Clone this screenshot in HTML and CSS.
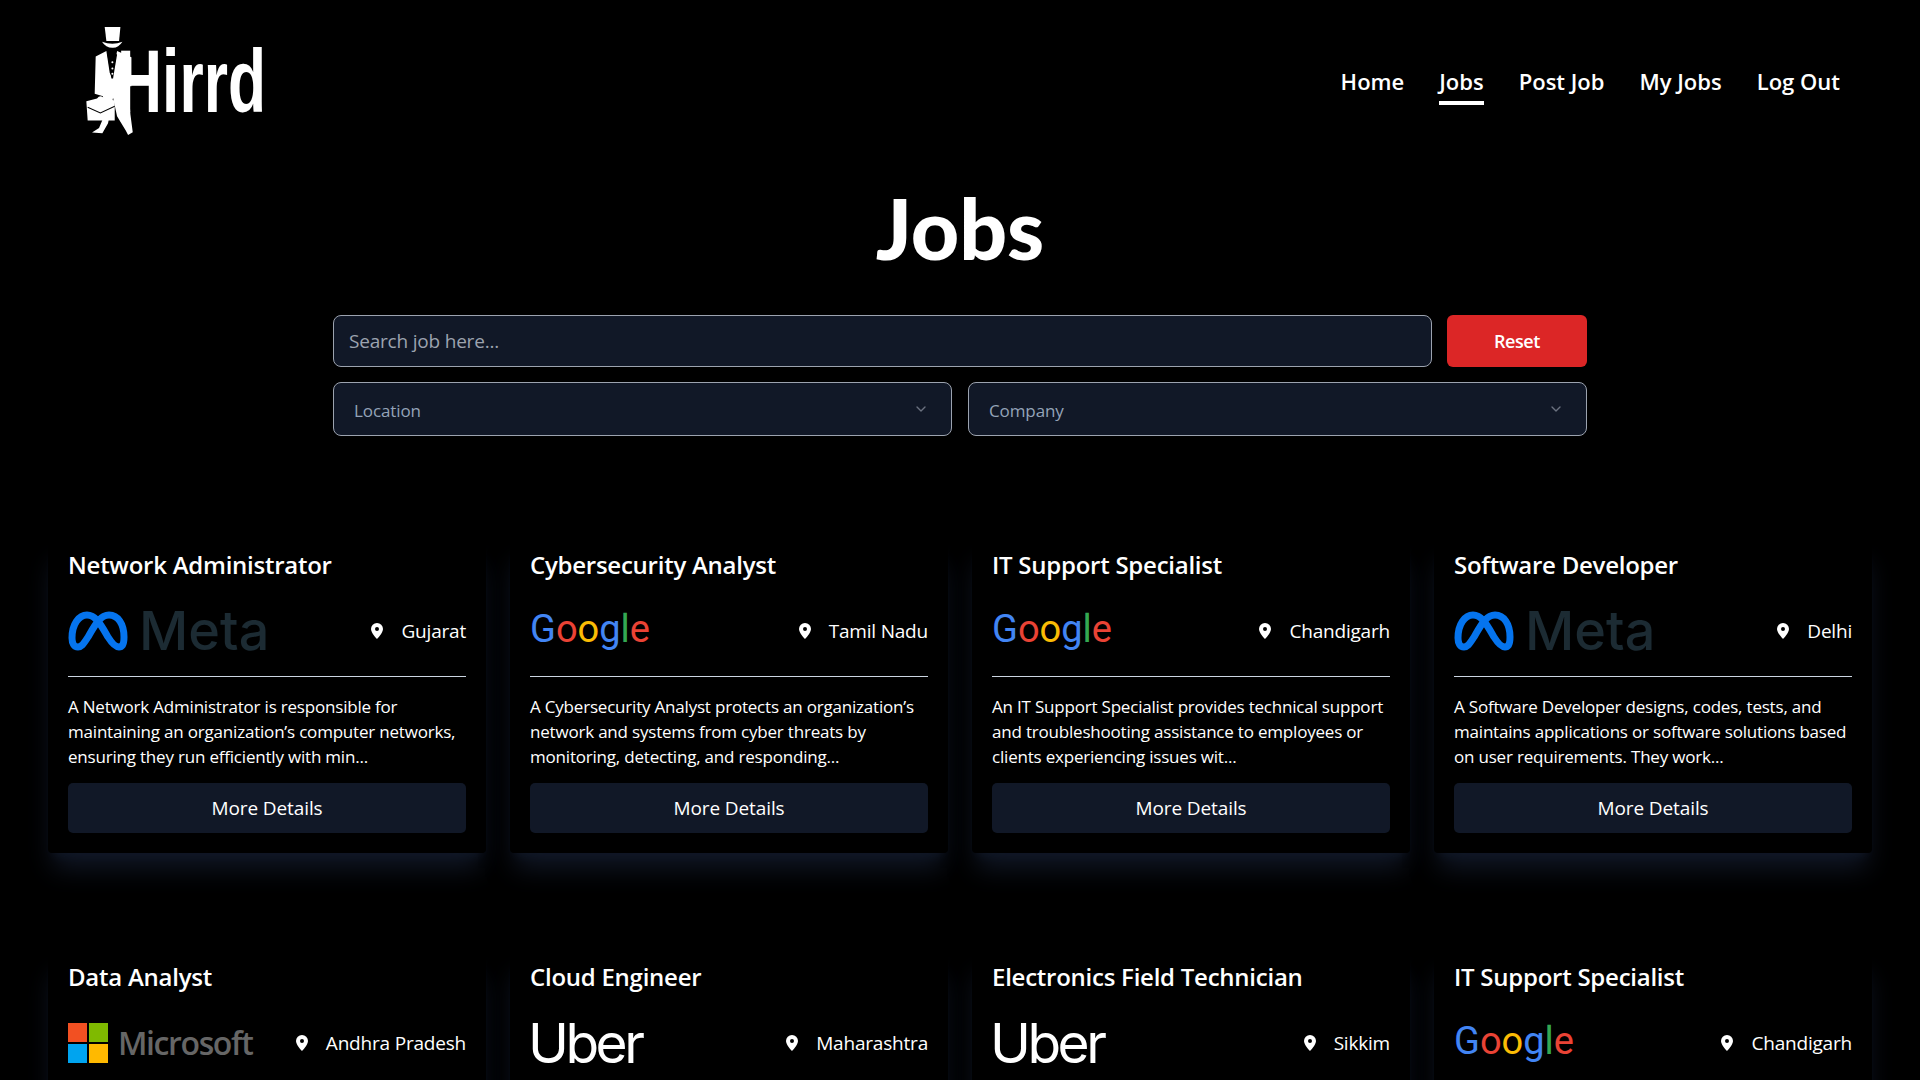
FILE: index.html
```html
<!DOCTYPE html>
<html lang="en">
<head>
  <meta charset="UTF-8">
  <title>Hirrd - Jobs</title>
  <link rel="stylesheet" href="styles.css">
</head>
<body>
  <header class="site-header">
    <a class="brand" href="#">
      <svg class="brand-logo" viewBox="70 60 560 350" role="img" aria-label="Hirrd">
        <path d="M135 78H182L178 120H140Z" fill="#fff"/>
        <path d="M127 122Q158 134 188 122Q176 141 158 140Q138 140 127 122Z" fill="#fff"/>
        <path d="M140 150L108 166L105 278L130 285L130 352L118 380L97 394L128 396L145 366L160 290L172 345L198 388L205 401L219 393L212 340L206 255H215V168L172 150L158 232L150 215Z" fill="#fff"/>
        <path d="M143 160L158 155L172 160L160 232H155Z" fill="#000"/>
        <circle cx="158" cy="183" r="3" fill="#fff"/>
        <circle cx="158" cy="202" r="3" fill="#fff"/>
        <circle cx="158" cy="218" r="3" fill="#fff"/>
        <path d="M80 300L112 292Q122 278 134 292L165 298V358H84Z" fill="#fff"/>
        <path d="M84 318L122 335L165 315" fill="none" stroke="#000" stroke-width="3"/>
        <text class="brand-word" x="172" y="333" textLength="446" lengthAdjust="spacingAndGlyphs">Hirrd</text>
      </svg>
    </a>
    <nav class="site-nav">
      <a href="#">Home</a>
      <a href="#" class="active">Jobs</a>
      <a href="#">Post Job</a>
      <a href="#">My Jobs</a>
      <a href="#">Log Out</a>
    </nav>
  </header>

  <h1 class="page-title">Jobs</h1>

  <div class="filters">
    <form class="search-row">
      <input type="text" class="search-input" placeholder="Search job here...">
      <button type="button" class="reset-btn">Reset</button>
    </form>
    <div class="select-row">
      <button type="button" class="select-box">
        <span>Location</span>
        <svg viewBox="0 0 24 24" class="chevron"><path d="m6 9 6 6 6-6"/></svg>
      </button>
      <button type="button" class="select-box">
        <span>Company</span>
        <svg viewBox="0 0 24 24" class="chevron"><path d="m6 9 6 6 6-6"/></svg>
      </button>
    </div>
  </div>

  <main class="job-grid">
    <article class="job-card">
      <h2>Network Administrator</h2>
      <div class="job-meta">
        <div class="logo logo-meta">
          <svg viewBox="0 0 60 40"><path d="M4 27C4 13 11 4 19 4C28 4 33 14 40 26C45 34 48 36 51 36C55 36 56 31 56 26C56 13 50 4 41 4C32 4 27 14 20 26C15 34 13 36 10 36C6 36 4 32 4 27Z"/></svg>
          <span>Meta</span>
        </div>
        <div class="job-place">
          <svg viewBox="0 0 12 16" class="pin"><path fill-rule="evenodd" d="M6 0a6 6 0 0 0-6 6c0 4 6 10 6 10s6-6 6-10a6 6 0 0 0-6-6zm0 4a2 2 0 1 1 0 4 2 2 0 0 1 0-4z"/></svg>
          <span>Gujarat</span>
        </div>
      </div>
      <p>A Network Administrator is responsible for maintaining an organization’s computer networks, ensuring they run efficiently with min...</p>
      <button type="button" class="details-btn">More Details</button>
    </article>

    <article class="job-card">
      <h2>Cybersecurity Analyst</h2>
      <div class="job-meta">
        <div class="logo logo-google"><b class="g-blue">G</b><b class="g-red">o</b><b class="g-yellow">o</b><b class="g-blue">g</b><b class="g-green">l</b><b class="g-red">e</b></div>
        <div class="job-place">
          <svg viewBox="0 0 12 16" class="pin"><path fill-rule="evenodd" d="M6 0a6 6 0 0 0-6 6c0 4 6 10 6 10s6-6 6-10a6 6 0 0 0-6-6zm0 4a2 2 0 1 1 0 4 2 2 0 0 1 0-4z"/></svg>
          <span>Tamil Nadu</span>
        </div>
      </div>
      <p>A Cybersecurity Analyst protects an organization’s network and systems from cyber threats by monitoring, detecting, and responding...</p>
      <button type="button" class="details-btn">More Details</button>
    </article>

    <article class="job-card">
      <h2>IT Support Specialist</h2>
      <div class="job-meta">
        <div class="logo logo-google"><b class="g-blue">G</b><b class="g-red">o</b><b class="g-yellow">o</b><b class="g-blue">g</b><b class="g-green">l</b><b class="g-red">e</b></div>
        <div class="job-place">
          <svg viewBox="0 0 12 16" class="pin"><path fill-rule="evenodd" d="M6 0a6 6 0 0 0-6 6c0 4 6 10 6 10s6-6 6-10a6 6 0 0 0-6-6zm0 4a2 2 0 1 1 0 4 2 2 0 0 1 0-4z"/></svg>
          <span>Chandigarh</span>
        </div>
      </div>
      <p>An IT Support Specialist provides technical support and troubleshooting assistance to employees or clients experiencing issues wit...</p>
      <button type="button" class="details-btn">More Details</button>
    </article>

    <article class="job-card">
      <h2>Software Developer</h2>
      <div class="job-meta">
        <div class="logo logo-meta">
          <svg viewBox="0 0 60 40"><path d="M4 27C4 13 11 4 19 4C28 4 33 14 40 26C45 34 48 36 51 36C55 36 56 31 56 26C56 13 50 4 41 4C32 4 27 14 20 26C15 34 13 36 10 36C6 36 4 32 4 27Z"/></svg>
          <span>Meta</span>
        </div>
        <div class="job-place">
          <svg viewBox="0 0 12 16" class="pin"><path fill-rule="evenodd" d="M6 0a6 6 0 0 0-6 6c0 4 6 10 6 10s6-6 6-10a6 6 0 0 0-6-6zm0 4a2 2 0 1 1 0 4 2 2 0 0 1 0-4z"/></svg>
          <span>Delhi</span>
        </div>
      </div>
      <p>A Software Developer designs, codes, tests, and maintains applications or software solutions based on user requirements. They work...</p>
      <button type="button" class="details-btn">More Details</button>
    </article>

    <article class="job-card">
      <h2>Data Analyst</h2>
      <div class="job-meta">
        <div class="logo logo-ms">
          <div class="ms-squares"><i class="ms-red"></i><i class="ms-green"></i><i class="ms-blue"></i><i class="ms-yellow"></i></div>
          <span>Microsoft</span>
        </div>
        <div class="job-place">
          <svg viewBox="0 0 12 16" class="pin"><path fill-rule="evenodd" d="M6 0a6 6 0 0 0-6 6c0 4 6 10 6 10s6-6 6-10a6 6 0 0 0-6-6zm0 4a2 2 0 1 1 0 4 2 2 0 0 1 0-4z"/></svg>
          <span>Andhra Pradesh</span>
        </div>
      </div>
    </article>

    <article class="job-card">
      <h2>Cloud Engineer</h2>
      <div class="job-meta">
        <div class="logo logo-uber">Uber</div>
        <div class="job-place">
          <svg viewBox="0 0 12 16" class="pin"><path fill-rule="evenodd" d="M6 0a6 6 0 0 0-6 6c0 4 6 10 6 10s6-6 6-10a6 6 0 0 0-6-6zm0 4a2 2 0 1 1 0 4 2 2 0 0 1 0-4z"/></svg>
          <span>Maharashtra</span>
        </div>
      </div>
    </article>

    <article class="job-card">
      <h2>Electronics Field Technician</h2>
      <div class="job-meta">
        <div class="logo logo-uber">Uber</div>
        <div class="job-place">
          <svg viewBox="0 0 12 16" class="pin"><path fill-rule="evenodd" d="M6 0a6 6 0 0 0-6 6c0 4 6 10 6 10s6-6 6-10a6 6 0 0 0-6-6zm0 4a2 2 0 1 1 0 4 2 2 0 0 1 0-4z"/></svg>
          <span>Sikkim</span>
        </div>
      </div>
    </article>

    <article class="job-card">
      <h2>IT Support Specialist</h2>
      <div class="job-meta">
        <div class="logo logo-google"><b class="g-blue">G</b><b class="g-red">o</b><b class="g-yellow">o</b><b class="g-blue">g</b><b class="g-green">l</b><b class="g-red">e</b></div>
        <div class="job-place">
          <svg viewBox="0 0 12 16" class="pin"><path fill-rule="evenodd" d="M6 0a6 6 0 0 0-6 6c0 4 6 10 6 10s6-6 6-10a6 6 0 0 0-6-6zm0 4a2 2 0 1 1 0 4 2 2 0 0 1 0-4z"/></svg>
          <span>Chandigarh</span>
        </div>
      </div>
    </article>
  </main>
</body>
</html>
```

FILE: styles.css
```css
* { box-sizing: border-box; }
html, body { margin: 0; height: 100vh; overflow: hidden; }
body { background: #000; color: #fff; font-family: "Open Sans", "Noto Sans", sans-serif; }

/* header */
.site-header { display: flex; justify-content: space-between; align-items: center; height: 112px; margin-top: 23px; padding: 0 80px 0 83px; }
.brand { display: block; line-height: 0; }
.brand-logo { width: 187px; height: 117px; overflow: visible; }
.brand-word { font-family: "Liberation Sans", sans-serif; font-weight: 700; font-size: 265px; fill: #fff; }
.site-nav { display: flex; gap: 35px; margin-top: 13px; font-size: 22px; font-weight: 600; letter-spacing: 0; }
.site-nav a { color: #fff; text-decoration: none; padding-bottom: 5px; border-bottom: 4px solid transparent; }
.site-nav a.active { border-bottom-color: #fff; }

/* title + filters */
.page-title { margin: 48px 0 0; text-align: center; font-family: Lato, "Open Sans", sans-serif; font-size: 84px; line-height: 90px; font-weight: 900; }
.filters { width: 1254px; margin: 42px auto 0; display: flex; flex-direction: column; gap: 15px; }
.search-row { display: flex; gap: 15px; }
.search-input { flex: 1; height: 52px; padding: 0 15px; background: #111827; border: 1px solid #9ca3af; border-radius: 8px; color: #fff; font: inherit; font-size: 19px; letter-spacing: -0.2px; }
.search-input::placeholder { color: #9ca3af; opacity: 1; }
.reset-btn { width: 140px; height: 52px; background: #dc2626; border: 0; border-radius: 6px; color: #fff; font: inherit; font-size: 18px; font-weight: 600; letter-spacing: -0.4px; }
.select-row { display: grid; grid-template-columns: 1fr 1fr; gap: 16px; }
.select-box { display: flex; justify-content: space-between; align-items: center; height: 54px; padding: 2px 22px 0 20px; background: #111827; border: 1px solid #9ca3af; border-radius: 8px; color: #94a3b8; font: inherit; font-size: 17px; letter-spacing: -0.1px; }
.chevron { width: 16px; height: 16px; margin-top: -3px; fill: none; stroke: #6b7280; stroke-width: 2; stroke-linecap: round; stroke-linejoin: round; }

/* cards */
.job-grid { display: grid; grid-template-columns: repeat(4, 1fr); grid-auto-rows: 314px; gap: 98px 24px; margin-top: 103px; padding: 0 48px; }
.job-card { display: flex; flex-direction: column; padding: 10px 20px 20px; border-radius: 4px; background: #000; box-shadow: 0 20px 25px -5px #111827, 0 8px 10px -6px #111827; }
.job-card h2 { margin: 0; font-size: 24px; line-height: 32px; font-weight: 600; letter-spacing: -0.25px; }
.job-meta { display: flex; justify-content: space-between; align-items: center; height: 66px; margin-top: 30px; padding-bottom: 26px; border-bottom: 1px solid #cbd5e1; }
.job-place { display: flex; align-items: center; gap: 18px; font-size: 19px; letter-spacing: -0.2px; }
.pin { width: 12px; height: 16px; fill: #fff; }
.job-card p { margin: 17px 0 14px; font-size: 17px; line-height: 25px; letter-spacing: -0.2px; }
.details-btn { height: 50px; margin-top: auto; background: #111827; border: 0; border-radius: 5px; color: #fff; font: inherit; font-size: 19px; letter-spacing: -0.1px; }

/* company logos */
.logo { display: flex; align-items: center; height: 40px; }
.logo-meta svg { width: 60px; height: 40px; fill: none; stroke: #0574ee; stroke-width: 7; }
.logo-meta span { margin-left: 11px; font-family: Inter, sans-serif; font-size: 54px; font-weight: 500; color: #1c2b33; }
.logo-google { font-family: Roboto, sans-serif; font-size: 38px; margin-top: -3px; }
.logo-google b { font-weight: 400; }
.g-blue { color: #4285f4; }
.g-red { color: #ea4335; }
.g-yellow { color: #fbbc05; }
.g-green { color: #34a853; }
.ms-squares { display: grid; grid-template-columns: 19px 19px; grid-auto-rows: 19px; gap: 2px; }
.ms-red { background: #f25022; }
.ms-green { background: #7fba00; }
.ms-blue { background: #00a4ef; }
.ms-yellow { background: #ffb900; }
.logo-ms span { margin-left: 10px; font-size: 32px; font-weight: 600; color: #666; letter-spacing: -1.4px; }
.logo-uber { margin-left: -2px; font-family: Inter, sans-serif; font-size: 55px; letter-spacing: -3.5px; color: #fff; }
```
